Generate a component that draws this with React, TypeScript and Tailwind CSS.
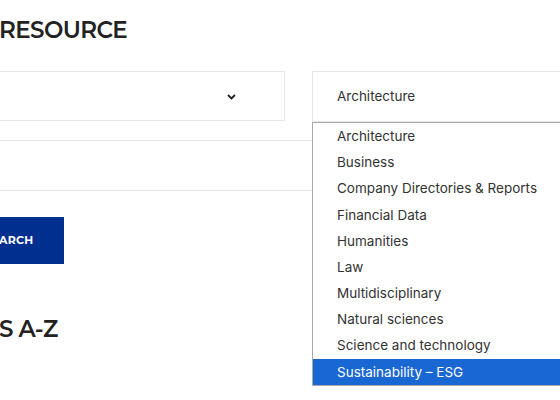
import { useState } from "react";

const categorias = [
  "Architecture",
  "Business",
  "Company Directories & Reports",
  "Financial Data",
  "Humanities",
  "Law",
  "Multidisciplinary",
  "Natural sciences",
  "Science and technology",
  "Sustainability – ESG",
];

export default function App() {
  const [seleccion, setSeleccion] = useState("Architecture");
  const [activo, setActivo] = useState("Sustainability – ESG");

  return (
    <main className="w-[560px] h-[400px] overflow-hidden bg-white text-[#222] relative">
      {/* TITULO */}
      <h1 className="font-['Montserrat','Open_Sans',sans-serif] font-semibold text-[23px] leading-none pt-[19px] -ml-[1px] tracking-[-0.6px]">
        RESOURCE
      </h1>

      {/* SELECTS */}
      <div className="flex gap-[27px] mt-[29px]">
        <div className="w-[295px] -ml-[10px] h-[50px] border border-[#e6e6e6] flex items-center justify-end pr-[48px] shrink-0">
          <svg width="9" height="6" viewBox="0 0 9 6" className="mt-[2px]">
            <polyline points="1,1 4.5,4.5 8,1" fill="none" stroke="#222" strokeWidth="1.8" />
          </svg>
        </div>

        <div className="relative w-[300px] shrink-0">
          <div className="h-[51px] border border-[#e6e6e6] flex items-center pl-[24px] font-['Inter',sans-serif] text-[13.5px] text-[#333]">
            {seleccion}
          </div>
          {/* LISTA ABIERTA */}
          <ul className="absolute left-0 top-[51px] w-full z-10 bg-white border border-[#a8a8a8] font-['Inter',sans-serif] text-[13.5px] text-[#333]">
            {categorias.map((c) => (
              <li
                key={c}
                onMouseEnter={() => setActivo(c)}
                onClick={() => setSeleccion(c)}
                className={
                  "h-[26.2px] flex items-center pl-[24px] " +
                  (c === activo ? "bg-[#1967d2] text-white" : "")
                }
              >
                {c}
              </li>
            ))}
          </ul>
        </div>
      </div>

      {/* INPUT */}
      <div className="mt-[18px] h-[51px] border-y border-[#e6e6e6]" />

      {/* BOTON */}
      <button className="mt-[26px] -ml-[40px] h-[47px] pl-[24px] pr-[30px] bg-[#00308f] text-white font-['Montserrat','Open_Sans',sans-serif] font-bold text-[11px] tracking-[0.3px]">
        SEARCH
      </button>

      {/* A-Z */}
      <h2 className="font-['Montserrat','Open_Sans',sans-serif] font-semibold text-[23px] leading-none mt-[54px] -ml-[1px] tracking-[-0.6px]">
        S A-Z
      </h2>
    </main>
  );
}
